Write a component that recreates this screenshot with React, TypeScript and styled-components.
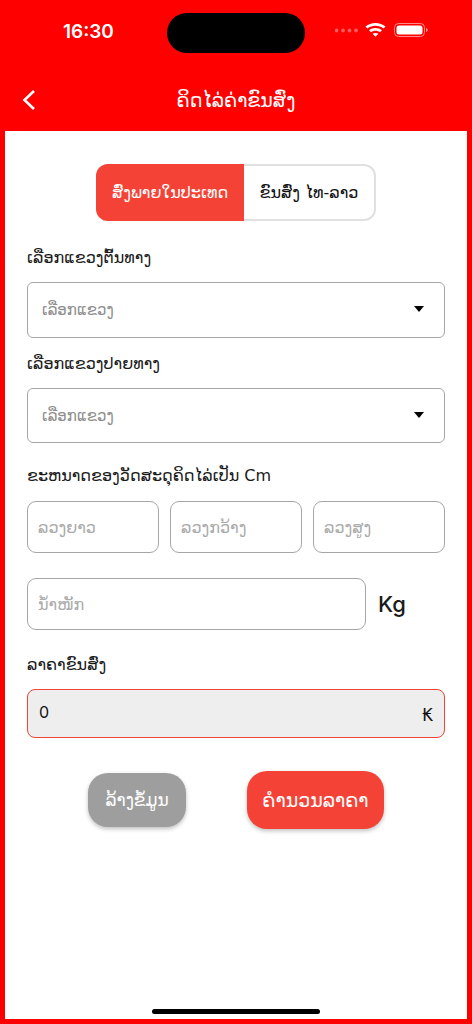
import React from "react";
import styled, { createGlobalStyle } from "styled-components";

const laoFont = `"DejaVu Sans", "Noto Sans", sans-serif`;

const GlobalStyle = createGlobalStyle`
  html, body {
    margin: 0;
    padding: 0;
    background: #ff0000;
  }
`;

const Screen = styled.div`
  width: 472px;
  height: 1024px;
  background: #ff0000;
  display: flex;
  flex-direction: column;
  overflow: hidden;
  font-family: ${laoFont};
`;

const StatusBar = styled.div`
  height: 66px;
  padding-top: 13px;
  box-sizing: border-box;
  display: grid;
  grid-template-columns: 167px 138px 167px;
`;

const Time = styled.div`
  padding: 9px 0 0 63px;
  font-family: Inter, "Liberation Sans", sans-serif;
  font-size: 19px;
  line-height: 20px;
  font-weight: 600;
  color: #fff;
`;

const Island = styled.div`
  height: 40px;
  border-radius: 20px;
  background: #000;
`;

const StatusIcons = styled.div`
  display: flex;
  align-items: flex-start;
  padding: 10px 0 0 30px;
`;

const Header = styled.div`
  height: 65px;
  display: flex;
  align-items: center;
  position: relative;
  justify-content: center;
`;

const BackButton = styled.svg`
  position: absolute;
  left: 21px;
  top: 23px;
`;

const Title = styled.div`
  font-size: 19px;
  color: #fff;
  margin-top: 2px;
`;

const Panel = styled.div`
  flex: 1;
  margin: 0 5px 5px;
  background: #fff;
  padding: 33px 22px 0;
  position: relative;
`;

const Tabs = styled.div`
  width: 280px;
  height: 57px;
  margin: 0 auto;
  box-sizing: border-box;
  border: 2px solid #e0e0e0;
  border-radius: 12px;
  display: flex;
`;

const Tab = styled.div<{ $active?: boolean }>`
  margin: ${(p) => (p.$active ? "-2px 0 -2px -2px" : "0")};
  width: ${(p) => (p.$active ? "148px" : "auto")};
  flex: ${(p) => (p.$active ? "none" : "1")};
  display: flex;
  align-items: center;
  justify-content: center;
  background: ${(p) => (p.$active ? "#f44336" : "transparent")};
  color: ${(p) => (p.$active ? "#fff" : "#111")};
  border-radius: ${(p) => (p.$active ? "12px 0 0 12px" : "0")};
  font-size: 16px;
  white-space: nowrap;
`;

const Label = styled.div<{ $top: number }>`
  margin-top: ${(p) => p.$top}px;
  height: 24px;
  line-height: 24px;
  font-size: 16px;
  font-weight: 500;
  color: #1a1a1a;
  white-space: nowrap;
`;

const Select = styled.div<{ $height: number }>`
  margin-top: 12px;
  height: ${(p) => p.$height}px;
  box-sizing: border-box;
  border: 1px solid #a6a6a6;
  border-radius: 6px;
  padding: 0 20px 0 14px;
  display: flex;
  align-items: center;
  justify-content: space-between;
`;

const Placeholder = styled.span`
  font-size: 15px;
  color: #8e8e8e;
`;

const Caret = styled.div`
  width: 0;
  height: 0;
  border-left: 5.5px solid transparent;
  border-right: 5.5px solid transparent;
  border-top: 6px solid #000;
  margin-top: -2px;
`;

const DimRow = styled.div`
  margin-top: 13px;
  display: grid;
  grid-template-columns: repeat(3, 132px);
  justify-content: space-between;
`;

const Input = styled.div`
  height: 52px;
  box-sizing: border-box;
  border: 1px solid #a6a6a6;
  border-radius: 9px;
  padding: 0 10px;
  display: flex;
  align-items: center;
  font-size: 16px;
  color: #ababab;
  white-space: nowrap;
`;

const WeightRow = styled.div`
  margin-top: 25px;
  display: grid;
  grid-template-columns: 339px auto;
  column-gap: 12px;
  align-items: center;
`;

const Unit = styled.span`
  font-family: Inter, "Liberation Sans", sans-serif;
  font-size: 22px;
  font-weight: 500;
  color: #1a1a1a;
`;

const Price = styled.div`
  margin-top: 12px;
  height: 49px;
  box-sizing: border-box;
  border: 1.5px solid #f44336;
  border-radius: 8px;
  background: #eeeeee;
  padding: 0 11px;
  display: flex;
  justify-content: space-between;
  font-family: Inter, "Liberation Sans", sans-serif;
  font-size: 16px;
  color: #111;
`;

const PriceValue = styled.span`
  margin-top: 12px;
  line-height: 20px;
`;

const Currency = styled.span`
  margin-top: 15px;
  line-height: 20px;
  font-family: "DejaVu Sans", sans-serif;
  font-size: 17px;
`;

const Actions = styled.div`
  margin-top: 33px;
  padding-left: 61px;
  display: flex;
  align-items: center;
  gap: 61px;
`;

const ActionButton = styled.div<{ $primary?: boolean }>`
  width: ${(p) => (p.$primary ? "137px" : "98px")};
  height: ${(p) => (p.$primary ? "58px" : "54px")};
  display: flex;
  align-items: center;
  justify-content: center;
  border-radius: 20px;
  background: ${(p) => (p.$primary ? "#f44336" : "#9e9e9e")};
  color: #fff;
  font-size: ${(p) => (p.$primary ? "19px" : "17px")};
  box-shadow: 0 2px 4px rgba(0, 0, 0, 0.25);
  white-space: nowrap;
`;

const HomeIndicator = styled.div`
  position: absolute;
  left: 147px;
  bottom: 5px;
  width: 168px;
  height: 5px;
  border-radius: 3px;
  background: #000;
`;

export default function App() {
  return (
    <>
      <GlobalStyle />
      <Screen>
        <StatusBar>
          <Time>16:30</Time>
          <Island />
          <StatusIcons>
            <svg width="130" height="20" viewBox="0 0 130 20" fill="none">
              <g fill="#ff5a5a">
                <circle cx="1.5" cy="7.5" r="1.9" />
                <circle cx="8" cy="7.5" r="1.9" />
                <circle cx="14.5" cy="7.5" r="1.9" />
                <circle cx="21" cy="7.5" r="1.9" />
              </g>
              <path
                d="M30.5 3.6 C36 -1.2 45 -1.2 50.5 3.6 L48.6 5.6 C44 1.8 37 1.8 32.4 5.6 Z M34 7.2 C37.6 4.2 43.4 4.2 47 7.2 L45 9.2 C42.4 7.2 38.6 7.2 36 9.2 Z M37.6 10.8 C39.2 9.6 41.8 9.6 43.4 10.8 L40.5 13.8 Z"
                fill="#fff"
              />
              <rect x="59.5" y="0.5" width="30" height="13" rx="4" stroke="#ff8a8a" />
              <rect x="61.5" y="2.5" width="26" height="9" rx="2.5" fill="#fff" />
              <path d="M91 5 C92.2 5.4 92.8 6.2 92.8 7 C92.8 7.8 92.2 8.6 91 9 Z" fill="#ff8a8a" />
            </svg>
          </StatusIcons>
        </StatusBar>
        <Header>
          <BackButton width="16" height="22" viewBox="0 0 16 22" fill="none">
            <path d="M13 2 L3.5 11 L13 20" stroke="#fff" strokeWidth="2.6" />
          </BackButton>
          <Title>ຄິດໄລ່ຄ່າຂົນສົ່ງ</Title>
        </Header>
        <Panel>
          <Tabs>
            <Tab $active>ສົ່ງພາຍໃນປະເທດ</Tab>
            <Tab>ຂົນສົ່ງ ໄທ-ລາວ</Tab>
          </Tabs>
          <Label $top={25}>ເລືອກແຂວງຕົ້ນທາງ</Label>
          <Select $height={56}>
            <Placeholder>ເລືອກແຂວງ</Placeholder>
            <Caret />
          </Select>
          <Label $top={14}>ເລືອກແຂວງປາຍທາງ</Label>
          <Select $height={55}>
            <Placeholder>ເລືອກແຂວງ</Placeholder>
            <Caret />
          </Select>
          <Label $top={21}>ຂະຫນາດຂອງວັດສະດຸຄິດໄລ່ເປັນ Cm</Label>
          <DimRow>
            <Input>ລວງຍາວ</Input>
            <Input>ລວງກວ້າງ</Input>
            <Input>ລວງສູງ</Input>
          </DimRow>
          <WeightRow>
            <Input>ນໍ້າໜັກ</Input>
            <Unit>Kg</Unit>
          </WeightRow>
          <Label $top={23}>ລາຄາຂົນສົ່ງ</Label>
          <Price>
            <PriceValue>0</PriceValue>
            <Currency>₭</Currency>
          </Price>
          <Actions>
            <ActionButton>ລ້າງຂໍ້ມູນ</ActionButton>
            <ActionButton $primary>ຄຳນວນລາຄາ</ActionButton>
          </Actions>
          <HomeIndicator />
        </Panel>
      </Screen>
    </>
  );
}
